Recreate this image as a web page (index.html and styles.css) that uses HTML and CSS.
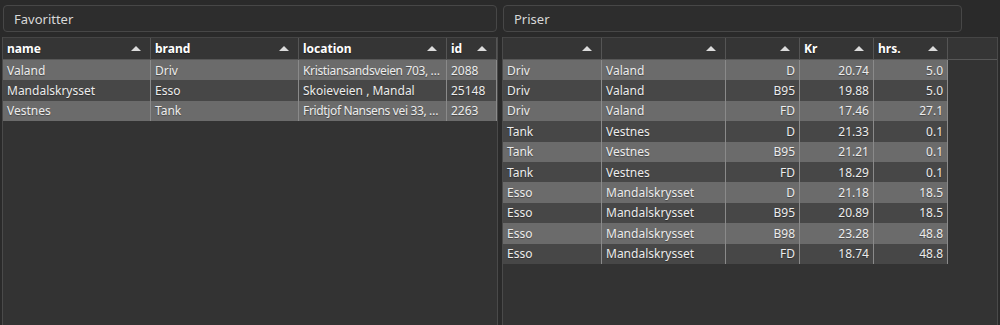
FILE: index.html
```html
<!DOCTYPE html>
<html>
<head>
<meta charset="utf-8">
<link rel="stylesheet" href="styles.css">
</head>
<body>
<div class="app">
  <section class="pane">
    <div class="field">Favoritter</div>
    <div class="table fav">
      <div class="row head">
        <div class="cell">name<span class="arrow"></span></div>
        <div class="cell">brand<span class="arrow"></span></div>
        <div class="cell">location<span class="arrow"></span></div>
        <div class="cell">id<span class="arrow"></span></div>
      </div>
      <div class="row light">
        <div class="cell">Valand</div><div class="cell">Driv</div><div class="cell elide">Kristiansandsveien 703, …</div><div class="cell">2088</div>
      </div>
      <div class="row dark">
        <div class="cell">Mandalskrysset</div><div class="cell">Esso</div><div class="cell">Skoieveien , Mandal</div><div class="cell">25148</div>
      </div>
      <div class="row light">
        <div class="cell">Vestnes</div><div class="cell">Tank</div><div class="cell elide">Fridtjof Nansens vei 33, …</div><div class="cell">2263</div>
      </div>
    </div>
  </section>
  <section class="pane">
    <div class="field short">Priser</div>
    <div class="table prices">
      <div class="row head">
        <div class="cell"><span class="arrow"></span></div>
        <div class="cell"><span class="arrow"></span></div>
        <div class="cell"><span class="arrow"></span></div>
        <div class="cell">Kr<span class="arrow"></span></div>
        <div class="cell">hrs.<span class="arrow"></span></div>
        <div class="cell filler"></div>
      </div>
      <div class="row light"><div class="cell">Driv</div><div class="cell">Valand</div><div class="cell num">D</div><div class="cell num">20.74</div><div class="cell num">5.0</div></div>
      <div class="row dark"><div class="cell">Driv</div><div class="cell">Valand</div><div class="cell num">B95</div><div class="cell num">19.88</div><div class="cell num">5.0</div></div>
      <div class="row light"><div class="cell">Driv</div><div class="cell">Valand</div><div class="cell num">FD</div><div class="cell num">17.46</div><div class="cell num">27.1</div></div>
      <div class="row dark"><div class="cell">Tank</div><div class="cell">Vestnes</div><div class="cell num">D</div><div class="cell num">21.33</div><div class="cell num">0.1</div></div>
      <div class="row light"><div class="cell">Tank</div><div class="cell">Vestnes</div><div class="cell num">B95</div><div class="cell num">21.21</div><div class="cell num">0.1</div></div>
      <div class="row dark"><div class="cell">Tank</div><div class="cell">Vestnes</div><div class="cell num">FD</div><div class="cell num">18.29</div><div class="cell num">0.1</div></div>
      <div class="row light"><div class="cell">Esso</div><div class="cell">Mandalskrysset</div><div class="cell num">D</div><div class="cell num">21.18</div><div class="cell num">18.5</div></div>
      <div class="row dark"><div class="cell">Esso</div><div class="cell">Mandalskrysset</div><div class="cell num">B95</div><div class="cell num">20.89</div><div class="cell num">18.5</div></div>
      <div class="row light"><div class="cell">Esso</div><div class="cell">Mandalskrysset</div><div class="cell num">B98</div><div class="cell num">23.28</div><div class="cell num">48.8</div></div>
      <div class="row dark"><div class="cell">Esso</div><div class="cell">Mandalskrysset</div><div class="cell num">FD</div><div class="cell num">18.74</div><div class="cell num">48.8</div></div>
    </div>
  </section>
</div>
</body>
</html>
```

FILE: styles.css
```css
html, body {
  margin: 0;
  padding: 0;
  background: #2a2a2a;
  width: 1000px;
  height: 325px;
  overflow: hidden;
}
body {
  font-family: "Noto Sans", "Open Sans", sans-serif;
  font-size: 12px;
  color: #ececec;
}
.app {
  display: flex;
  gap: 6px;
  padding: 5px 3px 0 3px;
  height: 325px;
  box-sizing: border-box;
}
.pane {
  width: 494px;
  display: flex;
  flex-direction: column;
  gap: 5px;
}
.field {
  height: 27px;
  flex: none;
  box-sizing: border-box;
  border: 1px solid #474747;
  border-radius: 4px;
  background: #2d2d2d;
  padding: 0 10px;
  display: flex;
  align-items: center;
  font-size: 13px;
  color: #d8d8d8;
}
.field.short { width: 459px; }
.table {
  flex: 1;
  background: #333333;
  border-left: 1px solid #4a4a4a;
  border-right: 1px solid #4a4a4a;
  margin: 0 -1px;
  overflow: hidden;
}
.row {
  display: grid;
  height: 20.4px;
}
.fav .row { grid-template-columns: 148px 148px 148px 50px; }
.prices .row { grid-template-columns: 99px 124px 74px 74px 74px; width: max-content; }
.prices .row.head { grid-template-columns: 99px 124px 74px 74px 74px 1fr; width: auto; }
.row.head {
  height: 23px;
  box-sizing: border-box;
  background: #353535;
  border-top: 1px solid #454545;
  border-bottom: 1px solid #575757;
}
.row.light { background: #6b6b6b; }
.row.dark { background: #474747; }
.cell {
  position: relative;
  padding: 0 4px;
  display: flex;
  align-items: center;
  white-space: nowrap;
  overflow: hidden;
  border-right: 1px solid #8a8a8a;
  text-shadow: 0 1px 1px rgba(0,0,0,0.35);
}
.cell.elide { letter-spacing: -0.35px; }
.row.head .cell {
  font-weight: bold;
  color: #ffffff;
  border-right: 1px solid #555;
}
.row.head .cell.filler { border-right: none; }
.cell.num { justify-content: flex-end; }
.arrow {
  position: absolute;
  right: 9px;
  top: 8px;
  width: 0;
  height: 0;
  border-left: 5px solid transparent;
  border-right: 5px solid transparent;
  border-bottom: 5px solid #dcdcdc;
}
```
